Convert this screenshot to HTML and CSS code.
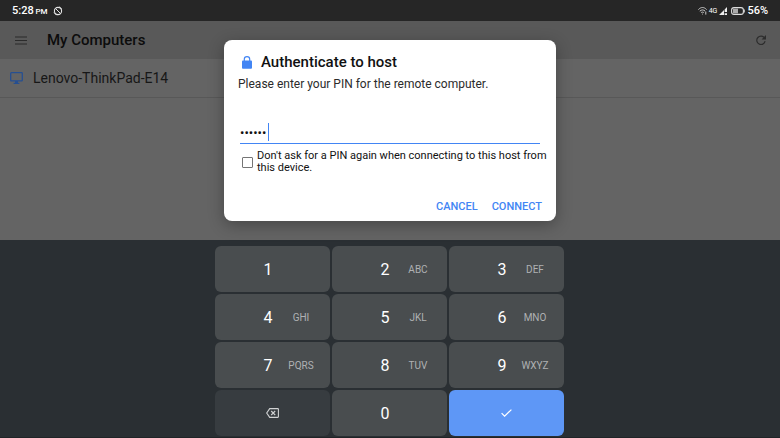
FILE: index.html
```html
<!DOCTYPE html>
<html lang="en">
<head>
<meta charset="utf-8">
<meta name="viewport" content="width=device-width, initial-scale=1">
<title>My Computers</title>
<link rel="stylesheet" href="styles.css">
</head>
<body>
<header class="status">
  <div class="status-group">
    <span class="clock">5:28 <small>PM</small></span>
    <svg width="10" height="10" viewBox="0 0 10 10" fill="none" stroke="#e4e4e4" stroke-width="1.1"><circle cx="5" cy="5" r="3.6"/><path d="M2.6 2.6l4.8 4.8M6.4.8L9 3.4M1 6.6l2.6 2.6" stroke-width="1"/></svg>
  </div>
  <div class="status-group right">
    <svg width="9" height="8" viewBox="0 0 9 8" fill="none" stroke="#c9c9c9" stroke-width="1"><path d="M.4 2.6C3-.2 6-.2 8.6 2.6M1.8 4.2c1.8-1.7 3.6-1.7 5.4 0M3.1 5.7c.9-.8 1.9-.8 2.8 0"/><circle cx="4.5" cy="7" r=".5" fill="#c9c9c9" stroke="none"/><path d="M7.8 4.6v3" /></svg>
    <span class="network">4G</span>
    <svg class="signal" width="8" height="8" viewBox="0 0 8 8"><path d="M0 8L5 3v5zM5.6 2.4L8 0v5H5.6zM5.6 6.2H8V8H5.6z" fill="#eee"/></svg>
    <svg width="14" height="8" viewBox="0 0 14 8"><rect x=".6" y=".6" width="11.8" height="6.8" rx="2.4" fill="none" stroke="#ddd" stroke-width="1.1"/><path d="M2 1.6h5v4.8H2z" fill="#aaa"/><path d="M12.8 2.5h1v3h-1z" fill="#ddd"/></svg>
    <span class="battery">56%</span>
  </div>
</header>
<main class="screen">
  <div class="toolbar">
    <button class="icon-button" type="button" aria-label="Menu"><svg width="12" height="9" viewBox="0 0 12 9"><path d="M0 1h12M0 4.5h12M0 8h12" stroke="#2b2b2b" stroke-width="1.1"/></svg></button>
    <h1>My Computers</h1>
    <button class="icon-button" type="button" aria-label="Refresh"><svg width="10" height="10" viewBox="0 0 10 10"><path d="M8.5 3A4.2 4.2 0 1 0 9.1 6.2" fill="none" stroke="#2d2d2d" stroke-width="1.2"/><path d="M10 0v4.4H5.6z" fill="#2d2d2d"/></svg></button>
  </div>
  <a class="computer" href="#">
    <svg width="13" height="12" viewBox="0 0 13 12"><rect x=".7" y=".7" width="11.6" height="8.2" rx=".7" fill="none" stroke="#264f91" stroke-width="1.3"/><path d="M5 9h3v1.7h1.4V12H3.6v-1.3H5z" fill="#264f91"/></svg>
    <span>Lenovo-ThinkPad-E14</span>
  </a>
  <div class="overlay">
    <form class="dialog" role="dialog" aria-labelledby="dialog-title">
      <div class="dialog-head">
        <svg width="10" height="13" viewBox="0 0 10 13"><path d="M2.3 5V3.3a2.7 2.7 0 0 1 5.4 0V5" fill="none" stroke="#4285f4" stroke-width="1.2"/><rect y="4.5" width="10" height="8.2" rx=".9" fill="#4285f4"/></svg>
        <h2 id="dialog-title">Authenticate to host</h2>
      </div>
      <label class="prompt" for="pin">Please enter your PIN for the remote computer.</label>
      <div class="pin-field">
        <input id="pin" type="text" value="••••••" autocomplete="off">
        <span class="caret"></span>
      </div>
      <div class="remember">
        <input id="remember" type="checkbox">
        <label for="remember">Don't ask for a PIN again when connecting to this host from this device.</label>
      </div>
      <div class="actions">
        <button type="button">CANCEL</button>
        <button type="button">CONNECT</button>
      </div>
    </form>
  </div>
</main>
<section class="keyboard" aria-label="Keypad">
  <button class="key" type="button"><b>1</b></button>
  <button class="key" type="button"><b>2</b><span>ABC</span></button>
  <button class="key" type="button"><b>3</b><span>DEF</span></button>
  <button class="key" type="button"><b>4</b><span>GHI</span></button>
  <button class="key" type="button"><b>5</b><span>JKL</span></button>
  <button class="key" type="button"><b>6</b><span>MNO</span></button>
  <button class="key" type="button"><b>7</b><span>PQRS</span></button>
  <button class="key" type="button"><b>8</b><span>TUV</span></button>
  <button class="key" type="button"><b>9</b><span>WXYZ</span></button>
  <button class="key action delete" type="button" aria-label="Delete"><svg width="13" height="10" viewBox="0 0 13 10" fill="none" stroke="#d0d2d3" stroke-width="1.1"><path d="M3.7.6h8.1q.6 0 .6.6v7.6q0 .6-.6.6H3.7L.7 5z"/><path d="M5.2 3l4 4M9.2 3l-4 4"/></svg></button>
  <button class="key" type="button"><b>0</b></button>
  <button class="key action enter" type="button" aria-label="Enter"><svg width="11" height="8" viewBox="0 0 11 8"><path d="M.6 4.2l3 3L10.4.6" fill="none" stroke="#fff" stroke-width="1.2"/></svg></button>
</section>
</body>
</html>
```
FILE: styles.css
```css
* {
  box-sizing: border-box;
}

body {
  margin: 0;
  min-height: 100vh;
  display: flex;
  flex-direction: column;
  background: #2a2f33;
  color: #111;
  font-family: Roboto, "Liberation Sans", sans-serif;
}

button,
input {
  margin: 0;
  padding: 0;
  border: 0;
  background: none;
  color: inherit;
  font: inherit;
}

svg {
  display: block;
  flex: none;
}

h1,
h2 {
  margin: 0;
  font-weight: 500;
}

.status {
  display: flex;
  justify-content: space-between;
  align-items: center;
  height: 21px;
  padding: 0 12px;
  background: #262626;
  color: #fff;
  font-size: 11px;
  font-weight: 500;
}

.status-group {
  display: flex;
  align-items: center;
  gap: 5px;
}

.status-group.right {
  gap: 2px;
}

.status small {
  margin-left: -1px;
  font-size: 8px;
}

.network {
  font-size: 7px;
  font-weight: 400;
}

.signal {
  margin-right: 2px;
}

.screen {
  position: relative;
  flex: 1;
  background: #646464;
}

.toolbar {
  display: flex;
  align-items: center;
  height: 38px;
  padding: 0 14px;
  background: #595959;
}

.icon-button {
  display: grid;
  place-items: center start;
  width: 32px;
  height: 32px;
  padding-left: 1px;
}

.icon-button:last-child {
  place-items: center end;
  margin-left: auto;
}

h1 {
  margin-left: 1px;
  color: #0c0c0c;
  font-size: 15px;
}

.computer {
  display: flex;
  align-items: center;
  gap: 10px;
  height: 39px;
  padding: 0 10px 1px;
  border-bottom: 1px solid #585858;
  color: #171717;
  font-size: 14px;
  text-decoration: none;
}

.overlay {
  position: absolute;
  inset: 0;
  display: flex;
  align-items: center;
  justify-content: center;
}

.dialog {
  width: 332px;
  padding: 12px 8px 7px 14px;
  border-radius: 8px;
  background: #fff;
  box-shadow: 0 4px 16px rgba(0, 0, 0, 0.3);
}

.dialog-head {
  display: flex;
  align-items: center;
  gap: 9px;
  padding-left: 4px;
}

h2 {
  font-size: 15px;
  line-height: 20px;
}

.prompt {
  display: block;
  margin-top: 4px;
  color: #2b2b2b;
  font-size: 12px;
  line-height: 16px;
}

.pin-field {
  position: relative;
  margin: 29px 8px 0 2px;
  border-bottom: 1px solid #4285f4;
}

.pin-field input {
  display: block;
  width: 100%;
  height: 22px;
  font-size: 13px;
  outline: 0;
}

.caret {
  position: absolute;
  top: 2px;
  left: 28px;
  width: 1px;
  height: 18px;
  background: #4285f4;
}

.remember {
  display: flex;
  align-items: center;
  gap: 4px;
  margin-top: 6px;
  padding-left: 4px;
  font-size: 11px;
  line-height: 12px;
}

.remember input {
  appearance: none;
  flex: none;
  width: 11px;
  height: 11px;
  border: 1px solid #757575;
  border-radius: 1px;
}

.actions {
  display: flex;
  justify-content: flex-end;
  gap: 14px;
  margin-top: 24px;
  padding-right: 6px;
  color: #4285f4;
  font-size: 11px;
  font-weight: 500;
}

.actions button {
  height: 16px;
}

.keyboard {
  display: grid;
  grid-template-columns: repeat(3, 115px);
  grid-auto-rows: 46px;
  gap: 2px;
  justify-content: center;
  padding: 6px 1px 1px 0;
  border-bottom: 1px solid #202427;
}

.key {
  display: grid;
  grid-template-columns: 38px 30px 36px 1fr;
  align-items: center;
  border-radius: 6px;
  background: #494d4f;
  color: #fff;
}

.key b {
  grid-column: 2;
  font-size: 16px;
  font-weight: 400;
}

.key span {
  grid-column: 3;
  justify-self: center;
  color: #afb1b3;
  font-size: 10px;
}

.key.action {
  display: flex;
  align-items: center;
  justify-content: center;
}

.key.delete {
  background: #373c40;
}

.key.enter {
  background: #5e97f6;
}
```
